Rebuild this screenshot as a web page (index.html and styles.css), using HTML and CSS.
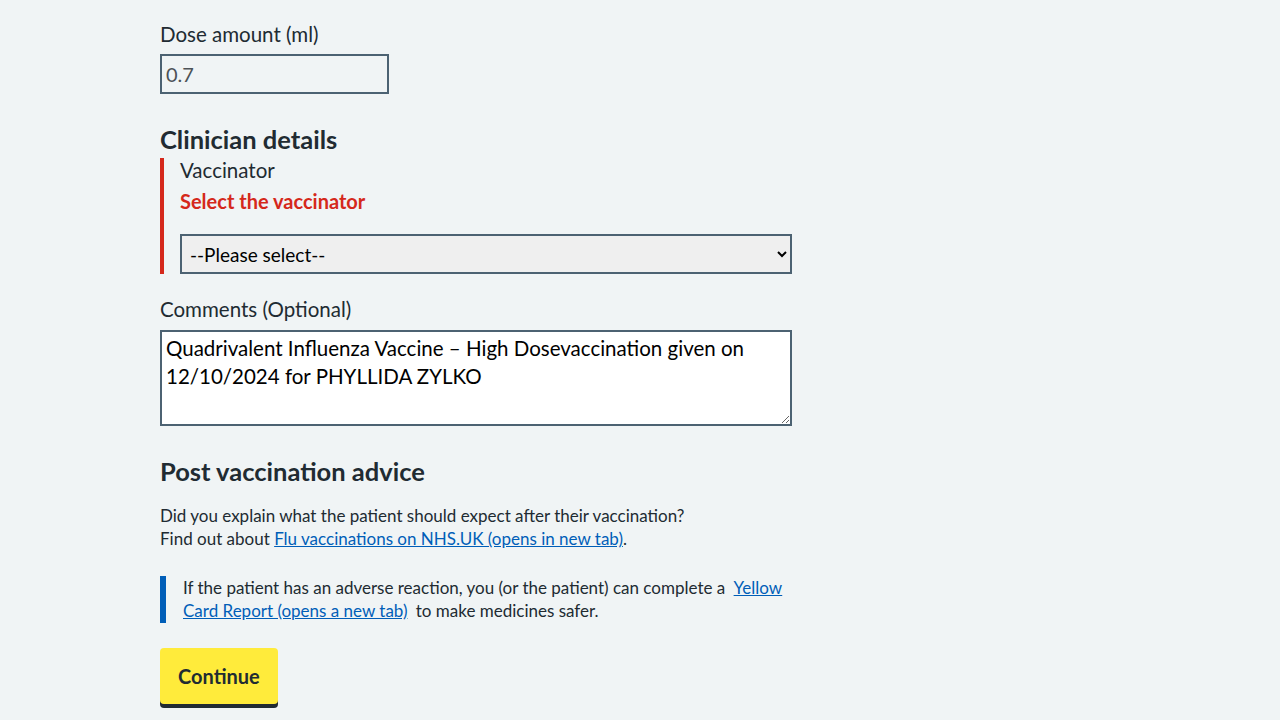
FILE: index.html
```html
<!DOCTYPE html>
<html lang="en">
<head>
<meta charset="utf-8">
<title>Record vaccination</title>
<link rel="stylesheet" href="styles.css">
</head>
<body>
<main class="page">
  <div class="form-group form-group-dose">
    <label class="label" for="dose">Dose amount (ml)</label>
    <input class="input input-dose" id="dose" type="text" value="0.7" readonly>
  </div>

  <h2 class="heading">Clinician details</h2>
  <div class="form-group-error">
    <label class="label label-error" for="vaccinator">Vaccinator</label>
    <span class="error-message">Select the vaccinator</span>
    <select class="select" id="vaccinator">
      <option>--Please select--</option>
    </select>
  </div>

  <div class="form-group form-group-comments">
    <label class="label" for="comments">Comments (Optional)</label>
    <textarea class="textarea" id="comments" rows="3">Quadrivalent Influenza Vaccine – High Dosevaccination given on 12/10/2024 for PHYLLIDA ZYLKO</textarea>
  </div>

  <h2 class="heading heading-advice">Post vaccination advice</h2>
  <p class="body-text">Did you explain what the patient should expect after their vaccination?<br>Find out about <a href="#">Flu vaccinations on NHS.UK (opens in new tab)</a>.</p>

  <div class="inset">
    <p>If the patient has an adverse reaction, you (or the patient) can complete a <a class="inset-link" href="#">Yellow Card Report (opens a new tab)</a> to make medicines safer.</p>
  </div>

  <button class="button" type="button">Continue</button>
</main>
</body>
</html>
```

FILE: styles.css
```css
html, body {
  margin: 0;
  padding: 0;
  background: #f0f4f5;
}
body {
  font-family: "Lato", "Liberation Sans", sans-serif;
  color: #212b32;
}
.page {
  width: 632px;
  margin-left: 160px;
  padding-top: 20px;
  padding-bottom: 40px;
}
.label {
  display: block;
  font-size: 20.5px;
  line-height: 28px;
  margin-bottom: 6px;
}
.form-group-dose {
  margin-bottom: 29px;
}
.input {
  box-sizing: border-box;
  height: 40px;
  border: 2px solid #4c6272;
  border-radius: 0;
  background: transparent;
  font-family: inherit;
  font-size: 20px;
  color: #4c5257;
  padding: 2px 4px;
  outline: none;
}
.input-dose {
  width: 229px;
  display: block;
}
.heading {
  font-size: 25.5px;
  line-height: 32px;
  font-weight: 700;
  margin: 0;
}
.form-group-error {
  border-left: 4px solid #d5281b;
  padding-left: 16px;
  margin-top: 3px;
}
.label-error {
  line-height: 24px;
  margin-bottom: 5px;
}
.error-message {
  display: block;
  color: #d5281b;
  font-weight: 700;
  font-size: 20px;
  line-height: 28px;
  margin-bottom: 19px;
}
.select {
  display: block;
  box-sizing: border-box;
  width: 612px;
  height: 40px;
  border: 2px solid #4c6272;
  border-radius: 0;
  background: #efefef;
  font-family: inherit;
  font-size: 19px;
  color: #000;
  padding: 0 4px;
}
.form-group-comments {
  margin-top: 21px;
}
.form-group-comments .label {
  margin-bottom: 7px;
}
.textarea {
  display: block;
  box-sizing: border-box;
  width: 632px;
  height: 96px;
  border: 2px solid #4c6272;
  border-radius: 0;
  background: #fff;
  font-family: inherit;
  font-size: 20.5px;
  line-height: 28px;
  color: #000;
  padding: 2px 4px;
  resize: vertical;
}
.heading-advice {
  margin-top: 29px;
  margin-bottom: 17px;
}
.body-text {
  font-size: 17px;
  line-height: 23px;
  margin: 0 0 26px;
}
a {
  color: #005eb8;
  text-decoration: underline;
}
.inset {
  border-left: 6px solid #005eb8;
  padding: 0 0 1px 17px;
  margin: 0 0 25px;
}
.inset p {
  font-size: 17px;
  line-height: 23px;
  margin: 0;
}
.inset-link {
  margin: 0 4px;
}
.button {
  display: block;
  font-family: inherit;
  font-size: 20px;
  font-weight: 700;
  color: #212b32;
  background: #ffeb3b;
  border: 0;
  border-radius: 4px;
  box-shadow: 0 4px 0 #212b32;
  padding: 0 18px;
  height: 56px;
  cursor: pointer;
}
```
